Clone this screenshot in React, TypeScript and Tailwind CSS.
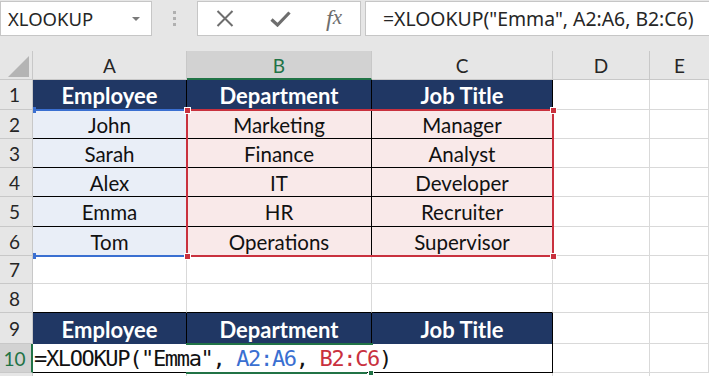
import React from "react";

const rowHeights = [30, 29, 29, 29, 30, 29, 28, 29, 31, 29];

function RowHead({ n, h, active }: { n: number; h: number; active?: boolean }) {
  return (
    <div
      style={{ height: h }}
      className={
        active
          ? "flex w-[33px] items-center justify-center border-b border-r-2 border-b-[#c8c8c8] border-r-[#217346] bg-[#d2d2d2] pr-[2px] pt-[2px] text-[19px] text-[#217346]"
          : "flex w-[33px] items-center justify-center border-b border-r border-[#c8c8c8] bg-[#e6e6e6] pr-[3px] pt-[2px] text-[19px] text-[#262626]"
      }
    >
      {n}
    </div>
  );
}

function Gr({ w, h }: { w: string; h: number }) {
  return <div style={{ height: h }} className={`${w} border-b border-r border-[#d9d9d9] bg-white`} />;
}

function Head({ h, w, text }: { h: number; w: string; text: string }) {
  return (
    <div
      style={{ height: h }}
      className={`${w} flex items-center justify-center border-r border-black bg-[#203764] pt-[1px] text-[22px] font-bold text-white`}
    >
      {text}
    </div>
  );
}

function Data({ h, w, text, tone }: { h: number; w: string; text: string; tone: "blue" | "pink" }) {
  return (
    <div
      style={{ height: h }}
      className={`${w} flex items-center justify-center border-b border-r border-black pt-[2px] text-[20.5px] text-[#111] ${
        tone === "blue" ? "bg-[#e9eef7]" : "bg-[#f9e9e9]"
      }`}
    >
      {text}
    </div>
  );
}

const WA = "w-[154px]";
const WB = "w-[185px]";
const WC = "w-[181px]";
const WD = "w-[97px]";
const WE = "w-[59px]";

const data: [string, string, string][] = [
  ["John", "Marketing", "Manager"],
  ["Sarah", "Finance", "Analyst"],
  ["Alex", "IT", "Developer"],
  ["Emma", "HR", "Recruiter"],
  ["Tom", "Operations", "Supervisor"],
];

export default function App() {
  return (
    <div className="relative h-[376px] w-[709px] overflow-hidden bg-[#e6e6e6] font-['Lato',sans-serif]">
      {/* Formula bar */}
      <div className="flex h-[51px] items-start pt-[1px]">
        <div className="flex h-[35px] w-[152px] items-center justify-between border border-[#c6c6c6] bg-white pl-[7px] pr-[11px]">
          <span className="font-['Noto_Sans',sans-serif] text-[18.5px] text-[#262626]">XLOOKUP</span>
          <svg width="8" height="4" viewBox="0 0 8 4">
            <path d="M0 0H8L4 4Z" fill="#7a7a7a" />
          </svg>
        </div>
        <div className="flex h-[35px] w-[45px] flex-col items-center justify-center gap-[3px]">
          <div className="h-[3px] w-[3px] bg-[#b0b0b0]" />
          <div className="h-[3px] w-[3px] bg-[#b0b0b0]" />
          <div className="h-[3px] w-[3px] bg-[#b0b0b0]" />
        </div>
        <div className="flex h-[35px] w-[164px] items-center border border-[#c6c6c6] bg-white">
          <div className="flex w-[54px] justify-center">
            <svg width="18" height="17" viewBox="0 0 18 17">
              <path d="M1.5 1L16.5 16M16.5 1L1.5 16" stroke="#6e6e6e" strokeWidth="2" />
            </svg>
          </div>
          <div className="flex w-[56px] justify-center">
            <svg width="21" height="16" viewBox="0 0 21 16">
              <path d="M1.5 8.5L7.5 14L19.5 1.5" stroke="#6e6e6e" strokeWidth="3.2" fill="none" />
            </svg>
          </div>
          <div className="flex w-[52px] items-center justify-center pb-[2px] font-['Liberation_Serif',serif] text-[24px] italic text-[#6e6e6e]">
            <span>f</span>
            <span className="text-[21px]">x</span>
          </div>
        </div>
        <div className="w-[4px]" />
        <div className="flex h-[35px] flex-1 items-center border border-r-0 border-[#c6c6c6] bg-white pl-[17px]">
          <span className="whitespace-pre font-['Noto_Sans',sans-serif] text-[19.4px] text-[#262626]">
            =XLOOKUP("Emma", A2:A6, B2:C6)
          </span>
        </div>
      </div>

      {/* Column headers */}
      <div className="flex h-[29px]">
        <div className="relative w-[33px] border-r border-b border-[#c8c8c8] bg-[#e6e6e6]">
          <svg className="absolute left-[8px] top-[5px]" width="21" height="21" viewBox="0 0 21 21">
            <path d="M21 0V21H0Z" fill="#b4b4b4" />
          </svg>
        </div>
        <div className={`${WA} flex items-center justify-center border-r border-b border-[#c8c8c8] bg-[#e6e6e6] pt-[3px] text-[19px] text-[#262626]`}>A</div>
        <div className={`${WB} flex items-center justify-center border-r border-b-2 border-r-[#c8c8c8] border-b-[#217346] bg-[#d2d2d2] pt-[4px] text-[19px] text-[#217346]`}>B</div>
        <div className={`${WC} flex items-center justify-center border-r border-b border-[#c8c8c8] bg-[#e6e6e6] pt-[3px] text-[19px] text-[#262626]`}>C</div>
        <div className={`${WD} flex items-center justify-center border-r border-b border-[#c8c8c8] bg-[#e6e6e6] pt-[3px] text-[19px] text-[#262626]`}>D</div>
        <div className={`${WE} flex items-center justify-center border-b border-[#c8c8c8] bg-[#e6e6e6] pt-[3px] text-[19px] text-[#262626]`}>E</div>
      </div>

      {/* Row 1 */}
      <div className="flex">
        <RowHead n={1} h={rowHeights[0]} />
        <Head h={rowHeights[0]} w={WA} text="Employee" />
        <Head h={rowHeights[0]} w={WB} text="Department" />
        <Head h={rowHeights[0]} w={WC} text="Job Title" />
        <Gr w={WD} h={rowHeights[0]} />
        <Gr w={WE} h={rowHeights[0]} />
      </div>

      {/* Rows 2-6 */}
      {data.map((r, i) => (
        <div className="flex" key={i}>
          <RowHead n={i + 2} h={rowHeights[i + 1]} />
          <Data h={rowHeights[i + 1]} w={WA} text={r[0]} tone="blue" />
          <Data h={rowHeights[i + 1]} w={WB} text={r[1]} tone="pink" />
          <Data h={rowHeights[i + 1]} w={WC} text={r[2]} tone="pink" />
          <Gr w={WD} h={rowHeights[i + 1]} />
          <Gr w={WE} h={rowHeights[i + 1]} />
        </div>
      ))}

      {/* Row 7 */}
      <div className="flex">
        <RowHead n={7} h={rowHeights[6]} />
        <Gr w={WA} h={rowHeights[6]} />
        <Gr w={WB} h={rowHeights[6]} />
        <Gr w={WC} h={rowHeights[6]} />
        <Gr w={WD} h={rowHeights[6]} />
        <Gr w={WE} h={rowHeights[6]} />
      </div>

      {/* Row 8 */}
      <div className="flex">
        <RowHead n={8} h={rowHeights[7]} />
        <div style={{ height: rowHeights[7] }} className={`${WA} border-r border-b border-r-[#d9d9d9] border-b-black bg-white`} />
        <div style={{ height: rowHeights[7] }} className={`${WB} border-r border-b border-r-[#d9d9d9] border-b-black bg-white`} />
        <div style={{ height: rowHeights[7] }} className={`${WC} border-r border-b border-r-[#d9d9d9] border-b-black bg-white`} />
        <Gr w={WD} h={rowHeights[7]} />
        <Gr w={WE} h={rowHeights[7]} />
      </div>

      {/* Row 9 */}
      <div className="flex">
        <RowHead n={9} h={rowHeights[8]} />
        <Head h={rowHeights[8]} w={WA} text="Employee" />
        <Head h={rowHeights[8]} w={WB} text="Department" />
        <Head h={rowHeights[8]} w={WC} text="Job Title" />
        <Gr w={WD} h={rowHeights[8]} />
        <Gr w={WE} h={rowHeights[8]} />
      </div>

      {/* Row 10 */}
      <div className="relative flex">
        <RowHead n={10} h={rowHeights[9]} active />
        <div style={{ height: rowHeights[9] }} className={`${WA} border-b border-black bg-white`} />
        <div style={{ height: rowHeights[9] }} className={`${WB} border-b border-black bg-white`} />
        <div style={{ height: rowHeights[9] }} className={`${WC} border-r border-b border-black bg-white`} />
        <Gr w={WD} h={rowHeights[9]} />
        <Gr w={WE} h={rowHeights[9]} />
        <div className="absolute left-[33px] top-0 flex h-[28px] items-center whitespace-pre bg-white pl-[1px] pr-[2px] pt-[1px] font-['DejaVu_Sans_Mono',monospace] text-[22px] tracking-[-1.35px] text-[#111]">
          <span>=XLOOKUP("Emma", </span>
          <span className="text-[#3a6fd1]">A2:A6</span>
          <span>, </span>
          <span className="text-[#c9313e]">B2:C6</span>
          <span>)</span>
        </div>
      </div>

      {/* Row 11 partial */}
      <div className="flex">
        <div className="h-[10px] w-[33px] border-r border-[#c8c8c8] bg-[#e6e6e6]" />
        <div className={`${WA} h-[10px] border-r border-[#d9d9d9] bg-white`} />
        <div className={`${WB} h-[10px] border-r border-[#d9d9d9] bg-white`} />
        <div className={`${WC} h-[10px] border-r border-[#d9d9d9] bg-white`} />
        <div className={`${WD} h-[10px] border-r border-[#d9d9d9] bg-white`} />
        <div className={`${WE} h-[10px] bg-white`} />
      </div>

      {/* Range highlight overlays */}
      <div className="pointer-events-none absolute left-[33px] top-[109px] h-[2px] w-[154px] bg-[#3a6fd1]" />
      <div className="pointer-events-none absolute left-[33px] top-[255px] h-[2px] w-[154px] bg-[#3a6fd1]" />
      <div className="pointer-events-none absolute left-[33px] top-[107px] h-[6px] w-[3px] bg-[#3a6fd1]" />
      <div className="pointer-events-none absolute left-[33px] top-[253px] h-[6px] w-[3px] bg-[#3a6fd1]" />

      <div className="pointer-events-none absolute left-[186px] top-[109px] h-[148px] w-[368px] border-2 border-[#c9313e]" />
      <div className="pointer-events-none absolute left-[184px] top-[107px] h-[7px] w-[7px] border border-white bg-[#c9313e]" />
      <div className="pointer-events-none absolute left-[550px] top-[107px] h-[7px] w-[7px] border border-white bg-[#c9313e]" />
      <div className="pointer-events-none absolute left-[184px] top-[253px] h-[7px] w-[7px] border border-white bg-[#c9313e]" />
      <div className="pointer-events-none absolute left-[550px] top-[253px] h-[7px] w-[7px] border border-white bg-[#c9313e]" />

      {/* Active cell */}
      <div className="pointer-events-none absolute left-[186px] top-[343px] h-[2px] w-[187px] bg-[#217346]" />
      <div className="pointer-events-none absolute left-[186px] top-[372px] h-[2px] w-[181px] bg-[#217346]" />
      <div className="pointer-events-none absolute left-[368px] top-[370px] h-[6px] w-[6px] border border-white bg-[#217346]" />
    </div>
  );
}
